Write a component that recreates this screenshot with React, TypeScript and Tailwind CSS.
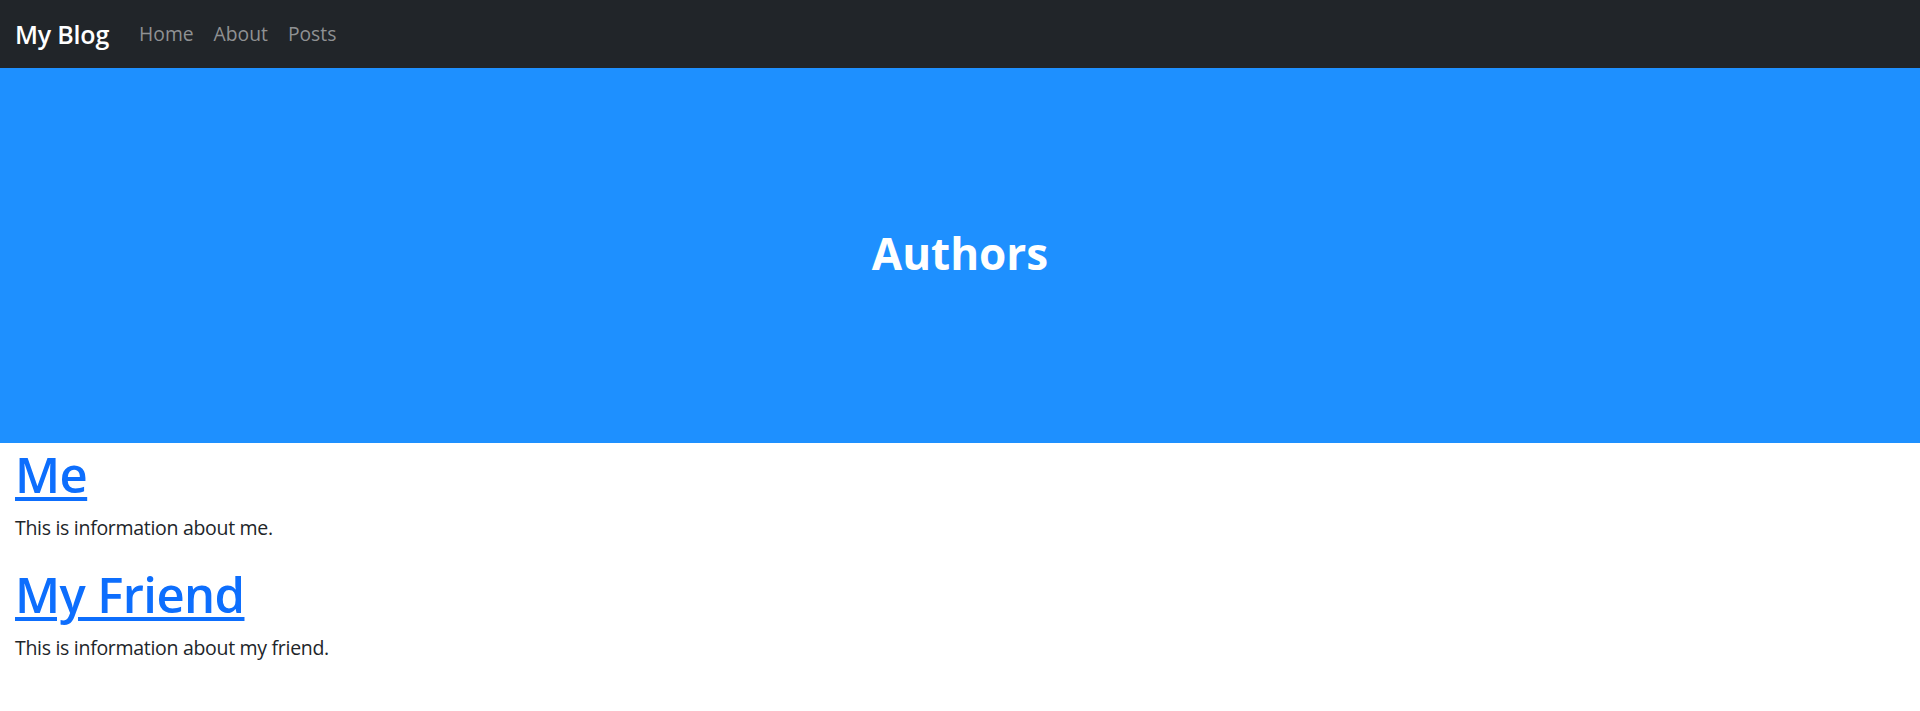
import React from "react";

export default function App() {
  const authors = [
    { name: "Me", info: "This is information about me." },
    { name: "My Friend", info: "This is information about my friend." },
  ];
  return (
    <div className="min-h-[711px] bg-white font-['Open_Sans',_'Noto_Sans',_sans-serif]">
      <nav className="h-[68px] bg-[#212529] flex items-center px-[15px]">
        <a href="#" className="text-[25px] leading-[38px] font-semibold text-white mr-[20px] no-underline tracking-[-0.2px]">
          My Blog
        </a>
        <ul className="flex items-center">
          {["Home", "About", "Posts"].map((l) => (
            <li key={l}>
              <a href="#" className="block px-[10px] text-[19.3px] leading-[30px] text-[#8f9193] no-underline">
                {l}
              </a>
            </li>
          ))}
        </ul>
      </nav>
      <header className="h-[375px] bg-[#1e90ff] flex items-center justify-center">
        <h1 className="text-[44px] leading-[54px] font-bold text-white -mt-[6px]">Authors</h1>
      </header>
      <main className="px-[15px] text-[#212529]">
        {authors.map((a) => (
          <section key={a.name}>
            <h1 className="text-[49px] leading-[62px] font-semibold tracking-[-0.6px]">
              <a href="#" className="text-[#0d6efd] underline decoration-[4px] underline-offset-[4px]">
                {a.name}
              </a>
            </h1>
            <p className="text-[19.5px] leading-[30px] tracking-[-0.3px] mt-[8px] mb-[20px]">{a.info}</p>
          </section>
        ))}
      </main>
    </div>
  );
}
